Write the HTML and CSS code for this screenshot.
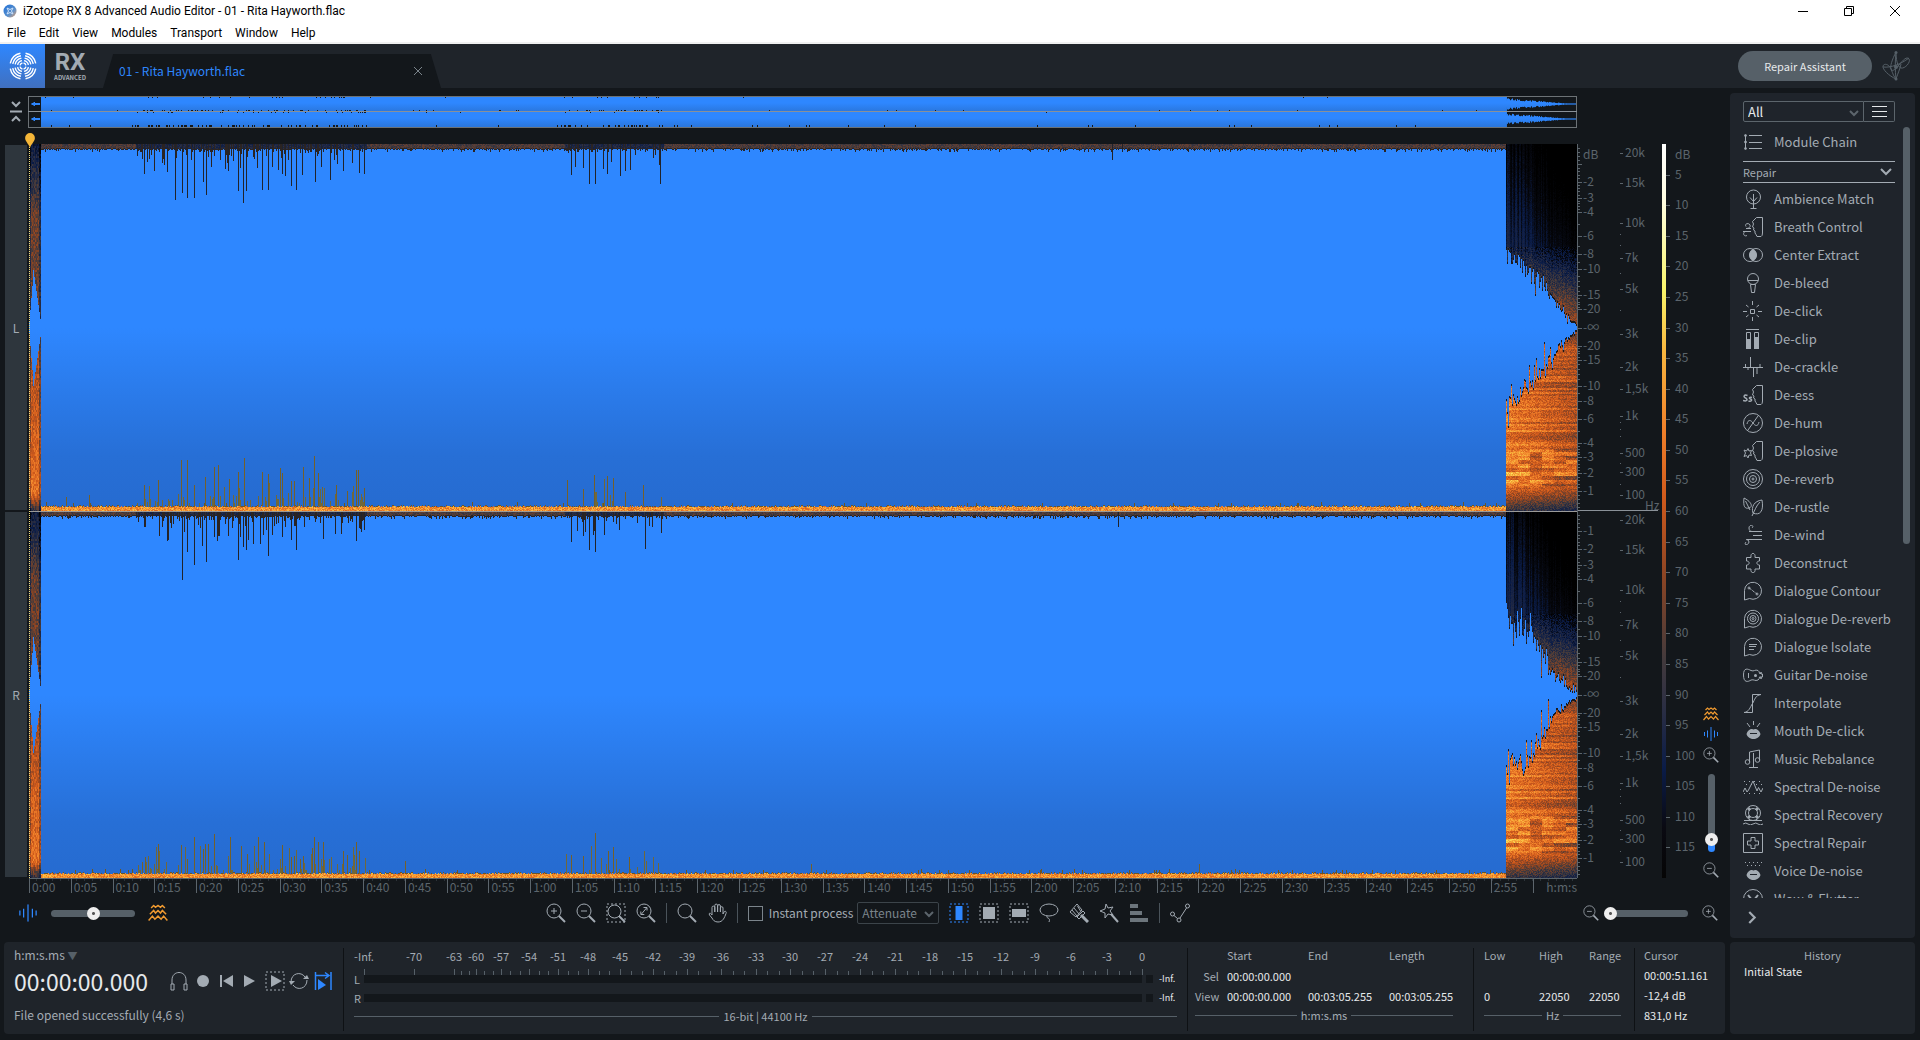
FILE: index.html
```
<!DOCTYPE html>
<html lang="en">
<head>
    <meta charset="UTF-8">
    <title>iZotope RX 8 Advanced Audio Editor</title>
    <link rel="stylesheet" href="styles.css">
</head>
<body>

<header class="titlebar">
    <svg class="app-icon" viewBox="0 0 14 14"><defs><linearGradient id="ball" x1="0" y1="0" x2="1" y2="1"><stop offset="0" stop-color="#1d6fd8"/><stop offset=".6" stop-color="#5a90cc"/><stop offset="1" stop-color="#e8a06a"/></linearGradient></defs><circle cx="7" cy="7" r="6.5" fill="url(#ball)"/><path d="M4 4q3 3 6 0M4 10q3-3 6 0M4 4q3 3 0 6M10 4q-3 3 0 6" fill="none" stroke="#cfe2fa"/></svg>
    <span class="app-title">iZotope RX 8 Advanced Audio Editor - 01 - Rita Hayworth.flac</span>
    <div class="window-buttons">
        <button aria-label="Minimize"><svg viewBox="0 0 10 10"><path d="M0 5.5h10"/></svg></button>
        <button aria-label="Restore"><svg viewBox="0 0 10 10"><path d="M.5 2.5h7v7h-7zM2.500 2.500v-2h7v7h-2"/></svg></button>
        <button aria-label="Close"><svg viewBox="0 0 10 10"><path d="M0 0l10 10M10 0L0 10"/></svg></button>
    </div>
</header>
<nav class="menubar">
    <a href="#">File</a><a href="#">Edit</a><a href="#">View</a><a href="#">Modules</a><a href="#">Transport</a><a href="#">Window</a><a href="#">Help</a>
</nav>

<div class="header">
    <div class="logo">
        <svg viewBox="0 0 28 28"><circle cx="14" cy="14" r="3" pathLength="4"/><circle cx="14" cy="14" r="5.5" pathLength="4"/><circle cx="14" cy="14" r="8" pathLength="4"/><circle cx="14" cy="14" r="10.5" pathLength="4"/><circle cx="14" cy="14" r="13" pathLength="4"/></svg>
    </div>
    <div class="brand"><b>RX</b><small>ADVANCED</small></div>
    <div class="tab">
        <span>01 - Rita Hayworth.flac</span>
        <button aria-label="Close tab"><svg viewBox="0 0 10 10"><path d="M1 1l8 8M9 1L1 9"/></svg></button>
    </div>
    <button class="assistant">Repair Assistant</button>
    <svg class="icon scribble" viewBox="0 0 28 30"><path d="M14 28C7 25 0 18 1 15s6-2 8 3 3 8 5 10M14 28C13 20 13 10 14 1M14 1c-4 8-6 14-5 17s4 1 8-4 8-9 10-6-4 10-8 9-5-10-5-16M1 16c8 1 18-3 26-9M14 28c2-6 4-10 5-15"/><circle class="fill" cx="14" cy="1.500" r="1.500"/><circle class="fill" cx="14" cy="28" r="1.500"/><circle class="fill" cx="14" cy="16" r="2"/></svg>
</div>

<main class="work">
    <section class="editor">
        <div class="overview-row">
            <button class="fold" aria-label="Collapse overview"><svg class="icon" viewBox="0 0 14 24"><path d="M3 2l4 4 4-4M1 11.500h12M3 21l4-4 4 4" stroke-width="2"/></svg></button>
            <canvas id="overview"></canvas>
        </div>
        <div class="spectrum">
            <div class="channels"><div>L</div><div>R</div></div>
            <div class="view">
                <canvas id="spectrogram"></canvas>
                <div class="playhead"><svg viewBox="0 0 12 18"><path d="M6 18C6 13 .5 10 .5 5.500a5.500 5.500 0 0 1 11 0C11.500 10 6 13 6 18z" fill="#f5b638"/></svg></div>
            </div>
            <div class="ruler db" id="dbRuler"></div>
            <div class="ruler hz" id="hzRuler"></div>
            <div class="ruler level" id="levelRuler"></div>
            <div class="zoom-side">
                <svg class="icon orange" viewBox="0 0 16 14"><use href="#waves"/></svg>
                <svg class="icon blue" viewBox="0 0 16 14"><use href="#bars"/></svg>
                <button aria-label="Zoom in vertically"><svg class="icon" viewBox="0 0 20 20"><use href="#zoomIn"/></svg></button>
                <input class="vertical" type="range" min="0" max="100" value="10" aria-label="Vertical zoom">
                <button aria-label="Zoom out vertically"><svg class="icon" viewBox="0 0 20 20"><use href="#zoomOut"/></svg></button>
            </div>
        </div>
        <div class="time-ruler" id="timeRuler"></div>
        <div class="toolbar">
            <div class="tools start">
                <svg class="icon blue mix-icon" viewBox="0 0 16 14"><use href="#bars"/></svg>
                <input type="range" class="mix" min="0" max="100" value="50" aria-label="Waveform and spectrogram balance">
                <svg class="icon orange mix-icon" viewBox="0 0 16 14"><use href="#waves"/></svg>
            </div>
            <div class="tools">
                <button aria-label="Zoom in"><svg class="icon" viewBox="0 0 20 20"><use href="#zoomIn"/></svg></button>
                <button aria-label="Zoom out"><svg class="icon" viewBox="0 0 20 20"><use href="#zoomOut"/></svg></button>
                <button aria-label="Zoom selection"><svg class="icon" viewBox="0 0 20 20"><path d="M1 1h18v18H1z" stroke-dasharray="2 2"/><circle cx="8.500" cy="8.500" r="6.500"/><path d="M13 13l6 6" stroke-width="2"/></svg></button>
                <button aria-label="Fit"><svg class="icon" viewBox="0 0 20 20"><circle cx="8" cy="8" r="7"/><path d="M13 13l6 6" stroke-width="2"/><path d="M5.500 11l5-6M7.500 4.500h3.500v3M4.800 8.500v3h3.500"/></svg></button>
                <i class="sep"></i>
                <button aria-label="Magnifier"><svg class="icon" viewBox="0 0 20 20"><circle cx="8" cy="8" r="7"/><path d="M13 13l6 6" stroke-width="2"/></svg></button>
                <button aria-label="Hand"><svg class="icon" viewBox="0 0 20 20"><path d="M5 12V4.500a1.400 1.400 0 0 1 2.800 0V9 2.500a1.400 1.400 0 0 1 2.800 0V9 3a1.400 1.400 0 0 1 2.800 0v6V5a1.300 1.300 0 0 1 2.600 0v1 5l1-2c1-1.500 3-.5 2 1.500-1.500 4-3 8.500-8 8.500-3.500 0-5-2-6-4L2.500 12c-1-2 .8-2.800 2.500 0z"/></svg></button>
                <i class="sep"></i>
                <label class="instant"><input type="checkbox">Instant process</label>
                <span class="select-box attenuate"><select aria-label="Instant process mode"><option>Attenuate</option></select><svg class="icon" viewBox="0 0 10 10"><path d="M1 3l4 4 4-4"/></svg></span>
                <button aria-label="Time selection"><svg class="icon blue" viewBox="0 0 20 20"><path d="M1 1h18v18H1z" stroke-dasharray="2 2"/><path class="fill" d="M6.500 3h7v14h-7z"/></svg></button>
                <button aria-label="Time-frequency selection"><svg class="icon" viewBox="0 0 20 20"><path d="M1 1h18v18H1z" stroke-dasharray="2 2"/><path class="fill" d="M4 4h12v12H4z"/></svg></button>
                <button aria-label="Frequency selection"><svg class="icon" viewBox="0 0 20 20"><path d="M1 1h18v18H1z" stroke-dasharray="2 2"/><path class="fill" d="M3 6h14v8H3z"/></svg></button>
                <button aria-label="Lasso"><svg class="icon" viewBox="0 0 20 20"><ellipse cx="10" cy="7" rx="9" ry="6"/><path d="M8 13c-1 3 4 1 2 6"/></svg></button>
                <button aria-label="Brush"><svg class="icon" viewBox="0 0 20 20"><path d="M1 9l7-8 5 6-6 7zM3 7l5 6M5 5l5 6M8.500 3l3 5"/><path d="M12 12l7 7" stroke-width="3"/><path d="M8 14l6-6 2 2-6 6z"/></svg></button>
                <button aria-label="Magic wand"><svg class="icon" viewBox="0 0 20 20"><path d="M7 1l2 4 5-1-3 4 3 4-5-1-3 4v-5L1 8l5-2z"/><path d="M12 11l7 8" stroke-width="2"/></svg></button>
                <button aria-label="Harmonics"><svg class="icon dim" viewBox="0 0 20 20"><path class="fill" d="M1 1h8v4H1zM1 8h12v4H1zM1 15h18v4H1z"/></svg></button>
                <i class="sep"></i>
                <button aria-label="Curve"><svg class="icon" viewBox="0 0 20 20"><circle cx="2.500" cy="11" r="2"/><circle cx="9" cy="17" r="2"/><circle cx="17.500" cy="3" r="2"/><path d="M4 12.500l3.500 3M10 15l6.500-10"/></svg></button>
            </div>
            <div class="tools end">
                <button aria-label="Zoom out horizontally"><svg class="icon" viewBox="0 0 20 20"><use href="#zoomOut"/></svg></button>
                <input type="range" min="0" max="100" value="0" aria-label="Horizontal zoom">
                <button aria-label="Zoom in horizontally"><svg class="icon" viewBox="0 0 20 20"><use href="#zoomIn"/></svg></button>
            </div>
        </div>
    </section>

    <aside class="modules">
        <div class="filter">
            <span class="select-box"><select aria-label="Module category"><option>All</option></select><svg class="icon" viewBox="0 0 10 10"><path d="M1 3l4 4 4-4"/></svg></span>
            <button aria-label="Module list menu"><svg viewBox="0 0 15 12"><path d="M0 .5h15M0 5.500h15M0 10.500h15"/></svg></button>
        </div>
        <div class="module-scroll">
            <div class="module-list">
                <a href="#" class="chain"><svg class="icon" viewBox="0 0 20 20"><path d="M6 3.500h13M6 10.500h13M6 16.500h13M2.500 3v14"/><circle cx="2.500" cy="3.500" r="1"/><circle cx="2.500" cy="10" r="1"/><circle cx="2.500" cy="16.500" r="1"/></svg>Module Chain</a>
                <button class="group">Repair<svg class="icon" viewBox="0 0 12 12"><path d="M1 3l5 5 5-5" stroke-width="2"/></svg></button>
                <a href="#"><svg class="icon" viewBox="0 0 20 20"><circle cx="10.500" cy="8" r="7"/><path d="M10.500 5v14M7 8.500l3.500 4 3.500-4M7.500 19.500h6"/></svg>Ambience Match</a>
                <a href="#"><svg class="icon" viewBox="0 0 20 20"><path id="face" d="M19.500 .5H13.500L9.500 4.500 10.500 7 9.500 10 11 11 10.500 13 12 14V16L13 17.500 14 19.500H18Q19.500 19 19.500 16z"/><path d="M3 9.500c-2-3 3-4 4-1.500S5 11.500 3 11.500M3 11.500H8M0 14.500h8M4 14.500c-5-1-4 6 0 4"/></svg>Breath Control</a>
                <a href="#"><svg class="icon" viewBox="0 0 20 20"><circle cx="7" cy="10" r="6.500"/><circle cx="13" cy="10" r="6.500"/><path class="fill" d="M10 4q7.500 6 0 12q-7.500-6 0-12z"/></svg>Center Extract</a>
                <a href="#"><svg class="icon" viewBox="0 0 20 20"><circle cx="10" cy="6" r="5.500"/><path d="M5 7.500h10M7.500 11.500l1 8h3l1-8z"/></svg>De-bleed</a>
                <a href="#"><svg class="icon" viewBox="0 0 20 20"><path d="M7.500 8.500h4v4h-4zM9.500 0v4M9.500 16v4M0 10.500h4M15 10.500h4M3 4l2.500 2M16 4l-2.500 2M3 16l2.500-2M16 16l-2.500-2"/></svg>De-click</a>
                <a href="#"><svg class="icon" viewBox="0 0 20 20"><path d="M3 .500h13M3.500 3.500h4v16h-4zM11.500 3.500h4v16h-4z"/><path class="fill" d="M3 10h5v10H3zM11 8h5v12h-5z"/></svg>De-clip</a>
                <a href="#"><svg class="icon" viewBox="0 0 20 20"><path d="M0 10.500h20M2.500 7v4M7.500 0v10M5 10v3M10.500 10v10M14 10v7M17 7v4"/></svg>De-crackle</a>
                <a href="#"><svg class="icon" viewBox="0 0 20 20"><use href="#face"/><path d="M4.500 10.500c-3.500-1.500-4.500 1.500-2 2.500s2 4-2.500 2.500M9 12.500c-2.500-1-3.500 1-1.500 1.500s1 3-2 2" stroke-width="1.500"/></svg>De-ess</a>
                <a href="#"><svg class="icon" viewBox="0 0 20 20"><circle cx="10" cy="10" r="9.500"/><path d="M15 3L5 17M4 11c1-5 4-4 6-1s5 4 6-1"/></svg>De-hum</a>
                <a href="#"><svg class="icon" viewBox="0 0 20 20"><use href="#face"/><path d="M1 9l2.500 1L5 7.500l1 2.500 2.500-.500-1 2.500 1 2.500-2.500-.500-1 3-1.500-2.500L1 15.500 2.500 12z"/></svg>De-plosive</a>
                <a href="#"><svg class="icon" viewBox="0 0 20 20"><circle cx="10" cy="10" r="9.500"/><circle cx="10" cy="10" r="6.500"/><circle cx="10" cy="10" r="3.500"/><circle cx="10" cy="10" r="1"/></svg>De-reverb</a>
                <a href="#"><svg class="icon" viewBox="0 0 20 20"><path d="M1 1c-1 9 1 11 5 10s3-6-5-10zM2.500 4L7 13M19 3c-8 1-11 7-9 13 7 3 11-2 9-13zM17 5c-4 4-5 8-8 14"/></svg>De-rustle</a>
                <a href="#"><svg class="icon" viewBox="0 0 20 20"><path d="M6 6.500h13M10 10.500h9M4 14.500h15M9 3c3-3-3-4-3 0 0 2 1 3.500 3 3.500M3 17c-3 4 3 3 3 0q0-2.500-3-2.500"/></svg>De-wind</a>
                <a href="#"><svg class="icon" viewBox="0 0 20 20"><path d="M3.500 4.500H8C7-1 13-1 12 4.500h4.500V8c-3.500 0-3.500 4 0 4v4H12c1 5-5 5-4 0H3.500v-4c3.500 0 3.500-4 0-4z"/></svg>Deconstruct</a>
                <a href="#"><svg class="icon" viewBox="0 0 20 20"><path id="bubble" d="M1.500 19V9.500a8.500 8.500 0 1 1 5 8z"/><circle cx="6" cy="7" r="1"/><circle cx="14" cy="13" r="1"/><path d="M6 7l3 2 1 1 4 3" stroke-dasharray="3 1"/></svg>Dialogue Contour</a>
                <a href="#"><svg class="icon" viewBox="0 0 20 20"><use href="#bubble"/><circle cx="10" cy="9.500" r="5.500"/><circle cx="10" cy="9.500" r="3"/><circle cx="10" cy="9.500" r="1"/></svg>Dialogue De-reverb</a>
                <a href="#"><svg class="icon" viewBox="0 0 20 20"><use href="#bubble"/><path d="M6 7.500h8M6 9.500h7M6 12.500h5"/></svg>Dialogue Isolate</a>
                <a href="#"><svg class="icon" viewBox="0 0 20 20"><path d="M.5 10C.5 2 5 4 8 5.500 11 7 12 4 15 5.500q1.500 1 1.500 3H18V7v2h1.500v3H18v2-2h-1.500q0 2-1.500 3c-3 1.500-4-1-7 0C5 17 .5 18 .5 10zM5.500 8v5"/><circle class="fill" cx="12.500" cy="10.500" r="1.500"/></svg>Guitar De-noise</a>
                <a href="#"><svg class="icon" viewBox="0 0 20 20"><path d="M18 1.500H9.500v18H1M18 1.500c-6 1-6 5-8.500 9S6 19 1 19.500"/></svg>Interpolate</a>
                <a href="#"><svg class="icon" viewBox="0 0 20 20"><path d="M10.500 0v4M4 2l3 4M17 2l-3 4"/><g id="lips"><path class="fill" d="M3.500 13c1-4 4.500-5.500 5.500-5l1.500.5 1.500-.5c1-.5 4.500 1 5.500 5-1 3.500-4 5-7 5s-6-1.500-7-5z"/><path d="M7 12.500h7" stroke="#1f242b"/></g></svg>Mouth De-click</a>
                <a href="#"><svg class="icon" viewBox="0 0 20 20"><circle cx="4.500" cy="13" r="2.300"/><circle cx="14.500" cy="11" r="2.300"/><path d="M6.500 13V3l10-2v10M10.500 4v15M6 18.500h9"/></svg>Music Rebalance</a>
                <a href="#"><svg class="icon" viewBox="0 0 20 20"><path d="M0 15l2-4 2 4 1.500-2L10 4l4 10 1.500-3.500L18 15l2-4"/><path d="M1 4.500h18M3 7.500h16M1 16.500h18" stroke-dasharray="1 4"/></svg>Spectral De-noise</a>
                <a href="#"><svg class="icon" viewBox="0 0 20 20"><circle cx="10" cy="8" r="7.500"/><circle cx="10" cy="8" r="4.500"/><path d="M5 3l2 2M15 3l-2 2M5 13l2-2M15 13l-2-2" stroke-width="3"/><path d="M1 15.500h18M0 19q3-2 5 0t5 0 5 0 5 0"/></svg>Spectral Recovery</a>
                <a href="#"><svg class="icon" viewBox="0 0 20 20"><path d="M.5.500h19v19H.5zM8 4.500h4V8h3.500v4H12v3.500H8V12H4.500V8H8z"/></svg>Spectral Repair</a>
                <a href="#"><svg class="icon" viewBox="0 0 20 20"><path d="M2 1.500h18M4 4.500h14" stroke-dasharray="1 3"/><use href="#lips" y="1"/></svg>Voice De-noise</a>
                <a href="#"><svg class="icon" viewBox="0 0 20 20"><circle cx="10" cy="10" r="9.500"/><path d="M5 6l4 5M15 6l-4 5" stroke-width="2"/></svg>Wow &amp; Flutter</a>
            </div>
            <div class="scrollbar"></div>
        </div>
        <button class="expand" aria-label="Expand"><svg class="icon" viewBox="0 0 12 12"><path d="M3 1l5 5-5 5" stroke-width="2"/></svg></button>
    </aside>
</main>

<footer class="bottom">
    <div class="panel">
        <section class="transport">
            <div class="format">h:m:s.ms <span>▼</span></div>
            <div class="clock-row">
                <strong>00:00:00.000</strong>
                <div class="play-buttons">
                    <button aria-label="Monitor"><svg class="icon" viewBox="0 0 20 20"><path d="M3 13V9c0-10 14-10 14 0v4M2 13h3v6H2zM15 13h3v6h-3z"/></svg></button>
                    <button aria-label="Record"><svg class="icon" viewBox="0 0 20 20"><circle class="fill" cx="10" cy="10" r="6"/></svg></button>
                    <button aria-label="Rewind"><svg class="icon" viewBox="0 0 20 20"><path class="fill" d="M16 4v12L6 10z"/><path d="M4 4v12" stroke-width="2"/></svg></button>
                    <button aria-label="Play"><svg class="icon" viewBox="0 0 20 20"><path class="fill" d="M3 4v12l11-6z"/></svg></button>
                    <button aria-label="Play selection"><svg class="icon" viewBox="0 0 20 20"><path d="M1 1h18v18H1z" stroke-dasharray="2 2"/><path class="fill" d="M6 4v12l11-6z"/></svg></button>
                    <button aria-label="Loop"><svg class="icon" viewBox="0 0 20 20"><path d="M2 11C2 2 12 0 16 6M18 9c0 9-10 11-14 5"/><path class="fill" d="M0 9l2-4 4 4zM14 11h6l-2 4z" transform="matrix(1 0 0 -1 0 19)"/></svg></button>
                    <button aria-label="Follow playback"><svg class="icon blue" viewBox="0 0 20 20"><path d="M2.500 1v18M18 1v18M3 4.500h12M12 1.500l4 3-4 3" stroke-width="1.500"/><path class="fill" d="M5 8v11l8-5z"/></svg></button>
                </div>
            </div>
            <div class="status">File opened successfully (4,6 s)</div>
        </section>
        <section class="meter">
            <div class="meter-scale" id="meterScale"></div>
            <div class="meter-row"><span>L</span><div class="bar"></div><i></i><em>-Inf.</em></div>
            <div class="meter-row"><span>R</span><div class="bar"></div><i></i><em>-Inf.</em></div>
            <div class="ruled">16-bit | 44100 Hz</div>
        </section>
        <section class="readout selection">
            <table>
                <tr><th></th><th>Start</th><th>End</th><th>Length</th></tr>
                <tr><th>Sel</th><td>00:00:00.000</td><td></td><td></td></tr>
                <tr><th>View</th><td>00:00:00.000</td><td>00:03:05.255</td><td>00:03:05.255</td></tr>
            </table>
            <div class="ruled">h:m:s.ms</div>
        </section>
        <section class="readout freq">
            <table>
                <tr><th>Low</th><th>High</th><th>Range</th></tr>
                <tr><td></td><td></td><td></td></tr>
                <tr><td>0</td><td>22050</td><td>22050</td></tr>
            </table>
            <div class="ruled">Hz</div>
        </section>
        <section class="readout cursor">
            <h2>Cursor</h2>
            <p>00:00:51.161</p>
            <p>-12,4 dB</p>
            <p>831,0 Hz</p>
        </section>
    </div>
    <div class="panel history">
        <h2>History</h2>
        <p>Initial State</p>
    </div>
</footer>

<svg class="defs" aria-hidden="true">
    <symbol id="zoomIn" viewBox="0 0 20 20"><circle cx="8" cy="8" r="7"/><path d="M5 8h6M8 5v6"/><path d="M13 13l6 6" stroke-width="2"/></symbol>
    <symbol id="zoomOut" viewBox="0 0 20 20"><circle cx="8" cy="8" r="7"/><path d="M5 8h6"/><path d="M13 13l6 6" stroke-width="2"/></symbol>
    <symbol id="bars" viewBox="0 0 16 14"><path d="M1.500 5v4M4.500 3.500v7M8 0v14M11.500 3.500v7M14.500 5v4"/></symbol>
    <symbol id="waves" viewBox="0 0 16 14"><path d="M2.500 3l2-2 1.500 1.500L8 1l2 1.500L11.500 1l2 2M1.500 8l3-3L6 7l2-2 2 2 1.500-2 3 3M.5 13l3-3.500L5.500 12 8 9.500l2.500 2.500 2-2.500 3 3.500" stroke-width="1.200"/></symbol>
</svg>

<script src="script.js"></script>
</body>
</html>
```
FILE: styles.css
```
* {
    box-sizing: border-box;
}
html, body {
    height: 100%;
    margin: 0;
}
body {
    display: flex;
    flex-direction: column;
    overflow: hidden;
    background-color: #13171b;
    color: #a3abb3;
    font-family: "Noto Sans CJK JP", "Noto Sans", sans-serif;
    font-size: 12px;
    line-height: 16px;
}
button, select, input {
    margin: 0;
    padding: 0;
    border: none;
    background: none;
    color: inherit;
    font: inherit;
}
button {
    display: flex;
    align-items: center;
    justify-content: center;
}
a {
    color: inherit;
    text-decoration: none;
}
h2, p {
    margin: 0;
    font-size: 12px;
    font-weight: normal;
}
canvas {
    display: block;
}
.defs {
    display: none;
}
.icon {
    display: block;
    flex: none;
    width: 20px;
    height: 20px;
    fill: none;
    stroke: #a3abb3;
    color: #a3abb3;
}
.icon .fill {
    fill: currentColor;
    stroke: none;
}
.icon.blue {
    stroke: #2e87ff;
    color: #2e87ff;
}
.icon.orange {
    stroke: #f09a30;
}
.icon.dim {
    color: #6c757c;
}

/* window frame */
.titlebar {
    display: flex;
    align-items: center;
    height: 22px;
    padding-left: 3px;
    background-color: #fff;
    color: #000;
    font-family: Roboto, sans-serif;
}
.app-icon {
    width: 14px;
    height: 14px;
    margin-right: 6px;
}
.window-buttons {
    display: flex;
    margin-left: auto;
    margin-right: 2px;
}
.window-buttons button {
    width: 46px;
    height: 20px;
}
.window-buttons svg {
    width: 10px;
    height: 10px;
    fill: none;
    stroke: #000;
}
.menubar {
    display: flex;
    gap: 13px;
    height: 22px;
    padding: 3px 7px;
    border-bottom: 2px solid #f0f0f0;
    background-color: #fff;
    color: #000;
    font-family: Roboto, sans-serif;
}

/* header */
.header {
    display: flex;
    align-items: center;
    height: 44px;
    background-color: #1f242a;
}
.logo {
    display: flex;
    align-items: center;
    justify-content: center;
    width: 45px;
    height: 44px;
    background: linear-gradient(#2e87ff, #4070c0);
}
.logo svg {
    width: 28px;
    height: 28px;
    fill: none;
    stroke: #fff;
    stroke-width: 1.4;
    stroke-dasharray: .74 .26;
    stroke-dashoffset: -.13;
}
.brand {
    display: flex;
    flex-direction: column;
    align-items: center;
    width: 50px;
}
.brand b {
    font-family: Roboto, sans-serif;
    font-size: 24px;
    line-height: 24px;
}
.brand small {
    font-size: 6px;
    font-weight: bold;
    line-height: 8px;
}
.tab {
    display: flex;
    align-items: center;
    justify-content: space-between;
    align-self: flex-end;
    width: 338px;
    height: 34px;
    margin-left: 8px;
    padding: 0 18px 0 16px;
    background-color: #13171b;
    clip-path: polygon(3% 0, 97% 0, 100% 100%, 0 100%);
    color: #2e87ff;
}
.tab button {
    width: 10px;
}
.tab svg {
    width: 10px;
    height: 10px;
    stroke: #7b848b;
}
.assistant {
    width: 134px;
    height: 30px;
    margin-left: auto;
    border-radius: 15px;
    background-color: #566068;
    color: #e6e9eb;
    font-size: 11px;
}
.scribble {
    width: 28px;
    height: 30px;
    margin: 0 10px;
    stroke: #566068;
    color: #566068;
}

/* editor */
.work {
    display: flex;
    flex: 1;
    min-height: 0;
}
.editor {
    display: flex;
    flex: 1;
    flex-direction: column;
    min-width: 0;
}
.overview-row {
    display: grid;
    grid-template-columns: 28px 1fr 148px;
    height: 56px;
    padding-top: 8px;
}
#overview {
    width: 100%;
    height: 32px;
}
.fold {
    height: 32px;
    padding-left: 4px;
}
.fold .icon {
    width: 14px;
    height: 24px;
}
.spectrum {
    display: grid;
    grid-template-columns: 29px 1fr 41px 44px 36px 27px;
    flex: 1;
    min-height: 0;
}
.channels {
    display: flex;
    flex-direction: column;
    gap: 2px;
    padding: 1px 2px 1px 5px;
}
.channels div {
    display: flex;
    flex: 1;
    align-items: center;
    justify-content: center;
    background-color: #2e363d;
}
.view {
    position: relative;
    min-width: 0;
    min-height: 0;
}
#spectrogram {
    position: absolute;
    width: 100%;
    height: 100%;
}
.playhead {
    position: absolute;
    top: 0;
    bottom: 0;
    left: 0;
    border-left: 1px dotted #f4e27a;
}
.playhead svg {
    position: absolute;
    bottom: 100%;
    left: -6px;
    width: 12px;
    height: 16px;
    margin-bottom: -5px;
}
.ruler {
    position: relative;
    color: #5c656c;
}
.ruler span {
    position: absolute;
    left: 6px;
    margin-top: -1px;
    line-height: 16px;
    white-space: nowrap;
    transform: translateY(-50%);
}
.ruler i {
    position: absolute;
    left: 0;
    width: 4px;
    height: 1px;
    background-color: #5c656c;
}
.ruler i.minor {
    width: 2px;
}
.db {
    border-left: 1px solid #5c656c;
}
.db::after, .hz::after {
    content: "";
    position: absolute;
    top: 50%;
    left: 0;
    width: 40px;
    height: 1px;
    margin-top: -1px;
    background-color: #8a9198;
}
.db span {
    left: 5px;
}
.hz span {
    left: 7px;
}
.hz i {
    left: 2px;
    width: 3px;
}
.hz i.minor {
    width: 1px;
}
.hz .unit {
    left: 27px;
}
.level {
    border-left: 4px solid;
    border-image: linear-gradient(#fff 0%, #fffde0 8%, #f8f46a 20%, #f9b840 28%, #f0802a 39%, #d05a1c 48%, #8a4424 59%, #433a3c 70%, #2a2e44 77%, #0a1c48 85%, #0a0a12 93%, #050505 100%) 1;
}
.level i {
    left: 0;
}
.level span {
    left: 9px;
}
.zoom-side {
    display: flex;
    flex-direction: column;
    align-items: center;
    justify-content: flex-end;
    gap: 6px;
    padding-right: 1px;
}
.zoom-side .icon {
    width: 16px;
    height: 14px;
}
.zoom-side button .icon {
    width: 16px;
    height: 16px;
}
.time-ruler {
    display: flex;
    height: 18px;
    margin: 0 148px 0 29px;
    border-top: 1px solid #5c656c;
    background: repeating-linear-gradient(90deg, transparent 0 7px, #2c3339 7px 8px) 0 0 / 100% 2px no-repeat;
    color: #5c656c;
}
.time-ruler span {
    flex: 0 0 auto;
    height: 14px;
    padding-left: 2px;
    border-left: 1px solid #5c656c;
    line-height: 16px;
}
.time-ruler .unit {
    flex: 1;
    padding: 0;
    text-align: right;
}

/* tools under the editor */
.toolbar {
    display: grid;
    grid-template-columns: 1fr auto 1fr;
    height: 46px;
    padding: 0 7px 12px 18px;
}
.tools {
    display: flex;
    align-items: center;
    gap: 10px;
}
.tools.start {
    gap: 13px;
}
.tools.end {
    justify-content: flex-end;
}
.tools.end .icon {
    width: 16px;
    height: 16px;
}
.tools.end input {
    margin: 0 4px 0 -5px;
}
.tools .mix-icon {
    width: 20px;
    height: 18px;
}
.sep {
    width: 1px;
    height: 20px;
    background-color: #4a535a;
}
.instant {
    display: flex;
    align-items: center;
    gap: 6px;
}
.instant input {
    width: 15px;
    height: 15px;
    border: 1px solid #7b848b;
    appearance: none;
}
.select-box {
    position: relative;
    display: flex;
    border: 1px solid #5c656c;
    border-radius: 2px;
}
.select-box select {
    flex: 1;
    padding: 0 16px 0 4px;
    appearance: none;
}
.select-box .icon {
    position: absolute;
    top: 50%;
    right: 4px;
    width: 10px;
    height: 10px;
    margin-top: -4px;
    stroke: #5c656c;
    stroke-width: 2;
    pointer-events: none;
}
.attenuate {
    width: 82px;
    height: 22px;
    margin-left: -6px;
    border-color: #3c444a;
    color: #7b848b;
}
input[type="range"] {
    width: 84px;
    height: 16px;
    appearance: none;
}
input[type="range"]::-webkit-slider-runnable-track {
    height: 7px;
    border-radius: 4px;
    background-color: #566068;
}
input[type="range"]::-webkit-slider-thumb {
    width: 13px;
    height: 13px;
    margin-top: -3px;
    border-radius: 50%;
    background: radial-gradient(circle, #555 0 1px, #eee 2px);
    appearance: none;
}
input[type="range"].vertical {
    width: 16px;
    height: 78px;
    margin: 5px 0 4px;
    writing-mode: vertical-lr;
    direction: rtl;
}
input[type="range"].vertical::-webkit-slider-runnable-track {
    width: 7px;
    height: 78px;
    background: linear-gradient(#566068 88%, #2e87ff 88%);
}
input[type="range"].vertical::-webkit-slider-thumb {
    margin: 0 0 0 -3px;
}

/* module list */
.modules {
    display: flex;
    flex-direction: column;
    width: 185px;
    margin: 5px 5px 4px;
    padding: 8px 4px 0 13px;
    border-radius: 4px;
    background-color: #1f242b;
}
.filter {
    display: flex;
    width: 152px;
    height: 21px;
    color: #e6e9eb;
}
.filter .select-box {
    width: 121px;
    border-radius: 2px 0 0 2px;
}
.filter select {
    font-size: 13px;
}
.filter button {
    flex: 1;
    border: 1px solid #5c656c;
    border-left: none;
    border-radius: 0 2px 2px 0;
}
.filter button svg {
    width: 15px;
    height: 12px;
    stroke: #e6e9eb;
}
.module-scroll {
    display: flex;
    flex: 1;
    justify-content: space-between;
    min-height: 0;
    overflow: hidden;
}
.module-list {
    width: 152px;
}
.module-list a {
    display: flex;
    align-items: center;
    gap: 11px;
    height: 28px;
    font-size: 13px;
    white-space: nowrap;
}
.module-list .chain {
    height: 39px;
}
.module-list .group {
    justify-content: space-between;
    width: 100%;
    height: 22px;
    border: solid #a3abb3;
    border-width: 1px 0;
    margin-bottom: 2px;
    padding-right: 3px;
    font-size: 11px;
}
.group .icon {
    width: 12px;
    height: 12px;
}
.scrollbar {
    width: 7px;
    height: 417px;
    margin: 5px 1px 0 0;
    border-radius: 4px;
    background-color: #566068;
}
.expand {
    width: 18px;
    height: 40px;
    padding-bottom: 2px;
}
.expand .icon {
    width: 13px;
    height: 13px;
}

/* bottom panels */
.bottom {
    display: grid;
    grid-template-columns: 1fr 185px;
    gap: 5px;
    padding: 0 5px 6px 4px;
}
.panel {
    display: grid;
    grid-template-columns: 339px 1fr 286px 161px 91px;
    height: 92px;
    padding: 6px 0;
    border-radius: 4px;
    background-color: #1f242a;
}
.panel section + section {
    border-left: 1px solid #0e1114;
}
.transport {
    padding-left: 10px;
}
.format {
    line-height: 14px;
}
.format span {
    color: #566068;
    font-size: 10px;
}
.clock-row {
    display: flex;
    align-items: center;
    height: 36px;
}
.clock-row strong {
    width: 155px;
    color: #e6e9eb;
    font-size: 23px;
    font-weight: normal;
}
.play-buttons {
    display: flex;
    gap: 4px;
}
.status {
    line-height: 32px;
}
.meter {
    padding: 0 10px;
}
.meter-scale {
    position: relative;
    height: 21px;
    margin: 0 35px 0 10px;
    font-size: 11px;
}
.meter-scale span {
    position: absolute;
    top: 0;
    transform: translateX(-50%);
}
.meter-scale i {
    position: absolute;
    top: 21px;
    width: 1px;
    height: 6px;
    background-color: #566068;
}
.meter-scale i.minor {
    top: 23px;
    height: 4px;
}
.meter-row {
    display: flex;
    align-items: center;
    height: 19px;
}
.meter-row span {
    width: 10px;
    font-size: 11px;
}
.meter-row .bar {
    flex: 1;
    height: 8px;
    background-color: #13171b;
}
.meter-row i {
    width: 7px;
    height: 8px;
    margin: 0 6px 0 4px;
    background-color: #13171b;
}
.meter-row em {
    width: 18px;
    color: #e6e9eb;
    font-size: 9px;
    font-style: normal;
}
.ruled {
    display: flex;
    align-items: center;
    gap: 4px;
    height: 18px;
    font-size: 11px;
}
.ruled::before, .ruled::after {
    content: "";
    flex: 1;
    height: 1px;
    background-color: #566068;
}
.readout table {
    border-collapse: collapse;
    table-layout: fixed;
    width: 100%;
}
.readout th, .readout td {
    height: 20px;
    padding: 0;
    font-size: 11px;
    font-weight: normal;
    text-align: left;
}
.readout tr:first-child th {
    height: 18px;
    padding-bottom: 4px;
    line-height: 14px;
}
.readout h2, .history h2 {
    font-size: 11px;
}
.readout td, .cursor p, .history p {
    color: #e6e9eb;
    font-size: 11px;
}
.selection {
    padding: 0 20px 0 7px;
}
.selection th:first-child {
    width: 32px;
    padding-right: 8px;
    text-align: right;
}
.selection th:nth-child(2), .selection th:nth-child(3) {
    width: 81px;
}
.freq {
    padding: 0 13px 0 10px;
}
.freq th:first-child {
    width: 55px;
}
.freq th:nth-child(2) {
    width: 50px;
}
.cursor {
    padding-left: 9px;
}
.cursor h2 {
    margin-bottom: 3px;
    line-height: 14px;
}
.cursor p {
    line-height: 20px;
}
.panel.history {
    display: block;
    padding: 5px 14px;
}
.history h2 {
    text-align: center;
}
```
FILE: script.js
```
const DURATION = 185.255;
const UNITS = 1548;

let seed = 7;
function rand() {
    seed = (seed * 16807) % 2147483647;
    return seed / 2147483647;
}

// level -> colour, from loud to silent
const palette = [
    [0, [255, 255, 255]], [0.2, [248, 244, 106]], [0.28, [249, 184, 64]], [0.39, [240, 128, 42]],
    [0.48, [208, 90, 28]], [0.59, [138, 68, 36]], [0.7, [67, 58, 60]], [0.77, [36, 42, 66]],
    [0.85, [10, 28, 72]], [0.93, [6, 8, 16]], [1, [0, 0, 0]]
];
function colour(v) {
    v = Math.max(0, Math.min(1, v));
    for (let i = 1; i < palette.length; i++) {
        if (v <= palette[i][0]) {
            const [a, ca] = palette[i - 1];
            const [b, cb] = palette[i];
            const t = (v - a) / (b - a);
            return `rgb(${ca.map((c, k) => Math.round(c + (cb[k] - c) * t)).join(',')})`;
        }
    }
    return '#000';
}

// clicks: position and length
const spikes = [
    {
        top: [[108, 12], [118, 18], [115, 30], [138, 28], [146, 56], [153, 49], [158, 54], [165, 54], [174, 38], [177, 51], [199, 27], [209, 47], [214, 59], [217, 47], [233, 46], [239, 46], [253, 30], [256, 32], [262, 42], [267, 46], [273, 31], [286, 38], [292, 23], [301, 36], [314, 27], [330, 29], [335, 30], [542, 31], [554, 24], [560, 40], [566, 40], [574, 25], [578, 30], [591, 32], [631, 40], [1083, 16], [1093, 8]],
        bottom: [[37, 14], [60, 16], [115, 26], [129, 31], [152, 51], [158, 51], [165, 26], [176, 34], [185, 44], [189, 46], [200, 32], [209, 39], [215, 53], [233, 39], [239, 37], [251, 43], [253, 38], [262, 30], [265, 30], [274, 44], [280, 33], [285, 55], [289, 38], [307, 26], [318, 20], [327, 41], [329, 41], [335, 23], [538, 31], [554, 22], [565, 36], [578, 35], [584, 33], [596, 19], [614, 26]]
    },
    {
        top: [[115, 16], [138, 30], [153, 69], [158, 41], [165, 54], [173, 35], [177, 51], [185, 26], [209, 49], [214, 36], [217, 39], [224, 33], [231, 33], [239, 45], [253, 26], [262, 29], [267, 39], [294, 28], [306, 23], [327, 30], [332, 21], [335, 19], [542, 31], [554, 25], [560, 39], [564, 24], [566, 41], [575, 24], [590, 19], [616, 38], [1089, 16]],
        bottom: [[113, 16], [116, 21], [129, 34], [152, 33], [158, 19], [165, 41], [174, 29], [176, 34], [179, 34], [185, 44], [201, 41], [212, 32], [218, 24], [229, 41], [235, 36], [253, 33], [262, 21], [265, 22], [271, 19], [274, 22], [283, 30], [285, 41], [289, 36], [294, 36], [314, 27], [318, 23], [327, 36], [330, 27], [376, 17], [542, 23], [554, 22], [566, 45], [579, 27], [584, 31], [600, 21], [782, 14], [1170, 14]]
    }
];
// half height of the fade out, as a part of the channel
const fades = [
    [[0, .43], [6, .36], [12, .38], [18, .32], [24, .31], [32, .26], [40, .22], [48, .15], [56, .09], [62, .045], [71, .01]],
    [[0, .40], [6, .36], [10, .38], [18, .36], [26, .33], [34, .23], [40, .18], [48, .11], [56, .07], [62, .035], [71, .01]]
];
function follow(points, x) {
    for (let i = 1; i < points.length; i++) {
        if (x <= points[i][0]) {
            const [a, va] = points[i - 1];
            const [b, vb] = points[i];
            return va + (vb - va) * (x - a) / (b - a);
        }
    }
    return points[points.length - 1][1];
}

function fit(canvas) {
    canvas.width = canvas.clientWidth;
    canvas.height = canvas.clientHeight;
    return canvas.getContext('2d');
}

function isBusy(u) {
    return (u > 106 && u < 338) || (u > 535 && u < 635);
}

function drawSpectrogram() {
    seed = 7;
    const canvas = document.getElementById('spectrogram');
    const ctx = fit(canvas);
    const w = canvas.width;
    const h = Math.floor(canvas.height / 2);
    const kx = w / UNITS;
    const rows = [];
    for (let i = 0; i < h; i++) rows.push((rand() - .5) * .12);

    for (let ch = 0; ch < 2; ch++) {
        const y0 = ch * (canvas.height - h);
        const mid = y0 + Math.round(h / 2);
        const bodyStart = Math.round(12 * kx);
        const bodyEnd = Math.round(1477 * kx);
        const blue = ctx.createLinearGradient(0, y0, 0, y0 + h);
        blue.addColorStop(0, '#2e87ff');
        blue.addColorStop(0.5, '#2e87ff');
        blue.addColorStop(0.85, '#276fd6');
        blue.addColorStop(1, '#266bd0');

        // start of the file
        for (let x = 0; x < bodyStart; x++) {
            for (let y = 0; y < h; y += 2) {
                const p = y / h;
                let v = p < .18 ? .84 - p : p < .5 ? .64 : .56 - (p - .5) * .3;
                if (p > .95) v = .42 + (p - .95) * 7;
                ctx.fillStyle = colour(v + (rand() - .5) * .14 + (x < 2 || x > 9 ? .12 : 0));
                ctx.fillRect(x, y0 + y, 1, 2);
            }
            const half = Math.round(x < 4 ? 6 + x * 12 : Math.max(9, 58 - (x - 4) * 7));
            ctx.fillStyle = blue;
            ctx.fillRect(x, mid - half, 1, half * 2);
        }

        // body
        ctx.fillStyle = blue;
        ctx.fillRect(bodyStart, y0, bodyEnd - bodyStart, h);
        for (let x = bodyStart; x < bodyEnd; x++) {
            const u = x / kx;
            const busy = isBusy(u);
            const dense = busy && u < 400 ? 1 : .5;
            const topEdge = 4 + (rand() > .6 ? 1 : 0);
            for (let y = 0; y < topEdge; y++) {
                ctx.fillStyle = colour((busy ? .79 : .69) + (rand() - .5) * .1);
                ctx.fillRect(x, y0 + y, 1, 1);
            }
            ctx.fillStyle = '#2b2422';
            ctx.fillRect(x, y0 + topEdge, 1, rand() > .85 ? 3 : 1);
            if (busy && rand() < .32 * dense) ctx.fillRect(x, y0, 1, Math.round(6 + rand() * rand() * 26));

            const low = 4 + (rand() > .7 ? 1 : 0);
            ctx.fillStyle = '#6d5524';
            ctx.fillRect(x, y0 + h - low - 1, 1, rand() > .5 ? 1 : 0);
            if (rand() > .97) ctx.fillRect(x, y0 + h - low - 4, 1, 4);
            if (busy && rand() < .25 * dense) {
                ctx.fillStyle = '#70683a';
                const len = Math.round(8 + rand() * rand() * 30);
                ctx.fillRect(x, y0 + h - len, 1, len);
            }
            for (let y = 0; y < low; y++) {
                ctx.fillStyle = colour(.36 + (rand() - .5) * .2);
                ctx.fillRect(x, y0 + h - 1 - y, 1, 1);
            }
        }
        for (const [x, len] of spikes[ch].top) {
            ctx.fillStyle = '#20232b';
            ctx.fillRect(Math.round(x * kx), y0, 1, len);
        }
        for (const [x, len] of spikes[ch].bottom) {
            ctx.fillStyle = '#74602a';
            ctx.fillRect(Math.round(x * kx), y0 + h - len, 1, len - 5);
        }

        // fade out at the end
        for (let x = bodyEnd; x < w; x++) {
            const u = (x - bodyEnd) / kx;
            const streak = rand() * .12;
            const block = Math.floor(u / 12);
            for (let y = 0; y < h; y++) {
                const p = y / h;
                let v;
                if (p < .5) {
                    v = 1 - p * .45 + u * .0016 - streak * (1 - u / 90);
                    if (p > .28) v -= (p - .28) * (u > 20 ? 1.5 : .6);
                    v = Math.max(v, .55);
                } else {
                    v = .43 - (p - .5) * .1 + u * .0018;
                    v += rows[Math.floor(y / 2)] + Math.sin(y * .37) * .02;
                    if (p > .83 && p < .94) v += rows[Math.floor(y / 4) + block * 9 % 40] * 1.5 - .02;
                    if (p > .93) v = Math.max(v, .42 + (p - .93) * 4.500 + u * .001);
                }
                ctx.fillStyle = colour(v + (rand() - .5) * (p > .28 ? .14 : .04));
                ctx.fillRect(x, y0 + y, 1, 1);
            }
            const level = follow(fades[ch], u) / 2 * h;
            const rough = u < 45 ? 16 : 5;
            for (const side of [-1, 1]) {
                let half = level + (rand() - .5) * rough;
                if (rand() > .75) half -= rand() * rough * 1.5;
                if (rand() > .9) half += rand() * rough * 1.5;
                half = Math.max(2, Math.round(half));
                const edge = side < 0 ? mid - half : mid;
                ctx.fillStyle = '#1b1a1c';
                ctx.fillRect(x, side < 0 ? edge - 2 : edge, 1, half + 2);
                ctx.fillStyle = blue;
                ctx.fillRect(x, edge, 1, half);
            }
        }
    }
    ctx.fillStyle = '#9a9a9a';
    ctx.fillRect(0, h, w, 1);
}

function drawOverview() {
    seed = 21;
    const canvas = document.getElementById('overview');
    const ctx = fit(canvas);
    const w = canvas.width;
    const kx = w / UNITS;
    for (let ch = 0; ch < 2; ch++) {
        const y0 = 1 + ch * 15;
        const blue = ctx.createLinearGradient(0, y0, 0, y0 + 15);
        blue.addColorStop(0.4, '#2e87ff');
        blue.addColorStop(1, '#2a76dc');
        ctx.fillStyle = blue;
        ctx.fillRect(13 * kx, y0, 1465 * kx, 15);
        for (let x = 3; x < 12; x++) {
            const half = x < 7 ? x - 2 : 2;
            ctx.fillRect(x, y0 + 7 - half / 2, 1, half);
        }
        for (let x = Math.floor(1478 * kx); x < w; x++) {
            const half = Math.max(.6, (5 - (x / kx - 1478) * .075) * (.7 + rand() * .5));
            ctx.fillRect(x, y0 + 7 - half, 1, half * 2);
        }
        ctx.fillStyle = '#14181c';
        for (let x = 0; x < w; x++) {
            const chance = isBusy(x / kx) ? .25 : .02;
            if (rand() < chance / 3) ctx.fillRect(x, y0, 1, 1);
            if (rand() < chance) ctx.fillRect(x, y0 + 13, 1, 2);
        }
    }
    ctx.strokeStyle = '#6c7276';
    ctx.strokeRect(.5, .5, w - 1, 31);
    ctx.fillStyle = '#8a9198';
    ctx.fillRect(0, 15, w, 1);
}

function mark(parent, side, percent, text, minor) {
    const el = document.createElement(text ? 'span' : 'i');
    el.style[side] = percent + '%';
    if (text) el.innerText = text;
    if (minor) el.classList.add('minor');
    parent.appendChild(el);
    return el;
}

function buildRulers() {
    const db = document.getElementById('dbRuler');
    const hz = document.getElementById('hzRuler');
    const level = document.getElementById('levelRuler');
    const frequencies = [['20k', 9], ['15k', 39], ['10k', 79], ['7k', 114], ['5k', 145], ['3k', 191], ['2k', 224], ['1,5k', 246], ['1k', 273], ['500', 310], ['300', 329], ['100', 352]];

    for (let ch = 0; ch < 2; ch++) {
        const centre = 25 + ch * 50;
        for (const d of [1, 2, 3, 4, 6, 8, 10, 15, 20]) {
            const offset = 25 * Math.pow(10, -d / 20);
            mark(db, 'top', centre - offset);
            mark(db, 'top', centre + offset);
            if (d > 1 || ch === 1) mark(db, 'top', centre - offset, '-' + d);
            mark(db, 'top', centre + offset, '-' + d);
        }
        for (let d = .2; d < 20; d += d < 4 ? .2 : 1) {
            const offset = 25 * Math.pow(10, -d / 20);
            mark(db, 'top', centre - offset, '', true);
            mark(db, 'top', centre + offset, '', true);
        }
        mark(db, 'top', centre);
        mark(db, 'top', centre, '-∞');

        for (const [name, y] of frequencies) {
            const top = (y + ch * 368) / 7.36;
            mark(hz, 'top', top);
            mark(hz, 'top', top, name);
        }
        for (const y of [90, 101, 129, 166, 279, 286, 293, 320, 341]) {
            mark(hz, 'top', (y + ch * 368) / 7.36, '', true);
        }
    }
    mark(db, 'top', 1.5, 'dB');
    mark(hz, 'top', 49.3, 'Hz').classList.add('unit');

    mark(level, 'top', 1.5, 'dB');
    for (let v = 5; v < 120; v += 5) {
        mark(level, 'top', v / 1.2);
        mark(level, 'top', v / 1.2, String(v));
    }

    const time = document.getElementById('timeRuler');
    for (let s = 0; s <= 180; s += 5) {
        const el = document.createElement('span');
        if (s < 180) {
            el.innerText = Math.floor(s / 60) + ':' + String(s % 60).padStart(2, '0');
            el.style.width = 500 / DURATION + '%';
        } else {
            el.innerText = 'h:m:s';
            el.className = 'unit';
        }
        time.appendChild(el);
    }

    const scale = document.getElementById('meterScale');
    const meter = [['-Inf.', 0], ['-70', 50], ['-63', 90], ['-60', 112], ['-57', 137], ['-54', 165], ['-51', 194], ['-48', 224], ['-45', 256], ['-42', 289], ['-39', 323], ['-36', 357], ['-33', 392], ['-30', 426], ['-27', 461], ['-24', 496], ['-21', 531], ['-18', 566], ['-15', 601], ['-12', 637], ['-9', 671], ['-6', 707], ['-3', 743], ['0', 778]];
    meter.forEach(([name, x], i) => {
        mark(scale, 'left', x / 7.78, name);
        mark(scale, 'left', x / 7.78);
        if (i > 1 && i < meter.length - 1) {
            const step = (meter[i + 1][1] - x) / 3;
            mark(scale, 'left', (x + step) / 7.78, '', true);
            mark(scale, 'left', (x + step * 2) / 7.78, '', true);
        }
    });
}

function draw() {
    drawOverview();
    drawSpectrogram();
}

buildRulers();
draw();
window.addEventListener('resize', draw);
```
